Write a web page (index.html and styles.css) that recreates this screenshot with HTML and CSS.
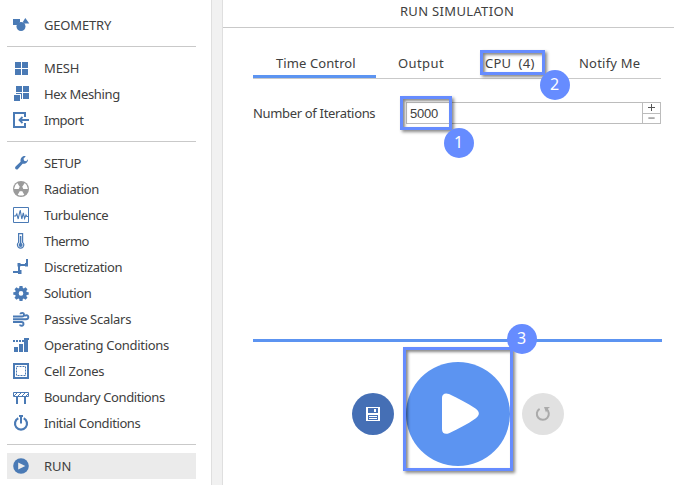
FILE: index.html
```html
<!DOCTYPE html>
<html lang="en">
<head>
<meta charset="utf-8">
<title>Run Simulation</title>
<link rel="stylesheet" href="styles.css">
</head>
<body>
<div class="app">
  <nav class="sidebar">
    <div class="group">
      <a class="item"><svg class="icon" viewBox="0 0 16 16"><path d="M0 2h7v3L4 8H0zM12.300 1l4 5.500H11L9.800 5z"/><circle cx="8" cy="9.500" r="4.500"/></svg><span class="w-geometry">GEOMETRY</span></a>
    </div>
    <div class="group">
      <a class="item"><svg class="icon" viewBox="0 0 16 16"><path d="M2 2h6v6H2zM9 2h6v6H9zM2 9h6v6H2zM9 9h6v6H9z"/></svg><span class="w-mesh">MESH</span></a>
      <a class="item"><svg class="icon" viewBox="0 0 16 16"><path d="M3 0h6v6H3zM10 0h6v6h-6zM10 7h6v6h-6zM1 9h6v6H1zM3 7h6v6H8V8H3z"/></svg><span class="w-hex">Hex Meshing</span></a>
      <a class="item"><svg class="icon line" viewBox="0 0 16 16"><path stroke-width="2" d="M12 5V1H1v14h11v-4"/><path stroke-width="1.8" d="M16 8H7M9.5 5 6.5 8l3 3"/></svg><span class="w-import">Import</span></a>
    </div>
    <div class="group">
      <a class="item"><svg class="icon" viewBox="0 0 16 16"><path d="M15 4.200c.2 3-2.600 5.300-5.400 4.500L5 13.900c-1.700 1.500-4-.7-2.400-2.400l5-4.800C7 3.500 9.300.5 12.700 1.200L10.500 3.700l.6 2 2.100.6z"/></svg><span class="w-setup">SETUP</span></a>
      <a class="item"><svg class="icon" viewBox="0 0 16 16"><circle cx="8" cy="8" r="8" fill="#9b9b9b"/><path fill="#fff" d="M6.900 6.100 4.300 2.100A7 7 0 0 0 1.200 7.500L1.300 8h4.500a2.200 2.200 0 0 1 1.100-1.900zM9.100 6.100l2.600-4a7 7 0 0 1 3.100 5.400L14.700 8h-4.500a2.200 2.200 0 0 0-1.100-1.900zM6.900 9.900 4.700 13.700A7 7 0 0 0 11.300 13.700L9.100 9.900a2.200 2.200 0 0 1-2.200 0z"/><circle cx="8" cy="8" r="1.500" fill="#9b9b9b"/></svg><span class="w-radiation">Radiation</span></a>
      <a class="item"><svg class="icon line" viewBox="0 0 16 16"><path stroke-width="1" d="M.5.5h15v15H.5z"/><path stroke-width="1.100" d="M1 9h1.600l1.200-2 1.400 5 2-9 1.600 9L10.300 6l1.300 5.500L13 8l.8 1.500H15"/></svg><span class="w-turbulence">Turbulence</span></a>
      <a class="item"><svg class="icon line" viewBox="0 0 16 16"><path stroke-width="1.200" d="M5.600.6h4v8.800a3.200 3.200 0 1 1-4 0z"/><path stroke-width="1.500" d="M7.600 3v8"/><circle class="solid" cx="7.600" cy="12" r="2"/></svg><span class="w-thermo">Thermo</span></a>
      <a class="item"><svg class="icon line" viewBox="0 0 16 16"><path stroke-width="2" d="M0 13h6V6h8V0"/><path class="solid" d="M5 11h3.500v4H5zM4.500 4h3v3.500h-3zM12 4h3v3.500h-3z"/></svg><span class="w-discretization">Discretization</span></a>
      <a class="item"><svg class="icon" viewBox="0 0 16 16"><path fill-rule="evenodd" d="M6.500 1h3l.3 2 1 .4 1.700-1.200 2 2-1.200 1.700.4 1 2 .3v2.600l-2 .3-.4 1 1.200 1.700-2 2-1.700-1.200-1 .4-.3 2h-3l-.3-2-1-.4-1.700 1.200-2-2 1.200-1.700-.4-1-2-.3V7.200l2-.3.4-1-1.200-1.700 2-2 1.700 1.200 1-.4zM8 6.100a2.300 2.300 0 1 0 0 4.600 2.300 2.300 0 0 0 0-4.600z"/></svg><span class="w-solution">Solution</span></a>
      <a class="item"><svg class="icon line" viewBox="0 0 16 16"><path stroke-width="1.900" d="M0 5.500h9c2.500 0 2.500-3.600.3-3.600-1.300 0-1.800.7-1.800 1.400M0 8.300h13c3 0 3-4 .5-4-1.200 0-1.600.7-1.600 1.300M0 11h8.500c2.700 0 2.500 3.800.3 3.800-1.200 0-1.700-.7-1.700-1.300"/></svg><span class="w-passive">Passive Scalars</span></a>
      <a class="item"><svg class="icon" viewBox="0 0 16 16"><path d="M0 3h2v2H0zM3 3h2v2H3zM6 3h2v2H6zM9 3h2v2H9zM1 10h4v5H1zM6 7h4v8H6zM11 1h5v2h-1v12h-4z"/></svg><span class="w-operating">Operating Conditions</span></a>
      <a class="item"><svg class="icon line" viewBox="0 0 16 16"><path stroke-width="2" d="M1 1h14v14H1z"/><path stroke-width="1" stroke-dasharray="2 1" d="M3.500 3.500h9v9h-9z"/></svg><span class="w-cell">Cell Zones</span></a>
      <a class="item"><svg class="icon line" viewBox="0 0 16 16"><path stroke-width="1" d="M.5 3.500h15v4H.5zM1 7l3-3M4.500 7.500l4-4M8.500 7.500l4-4M12.500 7.500l3-3"/><path stroke-width="2" d="M4 8v7M12 8v7"/></svg><span class="w-boundary">Boundary Conditions</span></a>
      <a class="item"><svg class="icon line" viewBox="0 0 16 16"><path stroke-width="2.200" d="M5.300 3.200a6 6 0 1 0 5.400 0"/><path stroke-width="2" d="M6 1h4M8 1v7.500"/></svg><span class="w-initial">Initial Conditions</span></a>
    </div>
    <div class="group">
      <a class="item selected"><svg class="icon" viewBox="0 0 16 16"><circle cx="8" cy="8" r="7.800"/><path fill="#ececec" d="M5.200 4.400 12.300 8l-7.100 3.600z"/></svg><span class="w-run">RUN</span></a>
    </div>
  </nav>
  <div class="gutter"></div>
  <main class="panel">
    <h1 class="title"><span class="w-title">RUN SIMULATION</span></h1>
    <div class="content">
      <div class="tabs">
        <div class="tab active"><span class="w-time">Time Control</span></div>
        <div class="tab output"><span class="w-output">Output</span></div>
        <div class="tab cpu"><span class="w-cpu">CPU &nbsp;(4)</span></div>
        <div class="tab notify"><span class="w-notify">Notify Me</span></div>
      </div>
      <div class="field">
        <label class="label"><span class="w-label">Number of Iterations</span></label>
        <div class="spinner">
          <div class="value">5000</div>
          <div class="steps">
            <svg viewBox="0 0 17 10"><path d="M5 4.500h7M8.500 1v7"/></svg>
            <svg viewBox="0 0 17 10"><path d="M5 4.500h7"/></svg>
          </div>
        </div>
      </div>
    </div>
    <div class="footer">
      <div class="round save"><svg width="14" height="14" viewBox="0 0 14 14"><path fill="#fff" fill-rule="evenodd" d="M0 0h14v14H0zM2 1v5h10V1zM2 8v5h10V8z"/><path fill="#fff" d="M8 2h2v3H8zM3 9h8v1H3zM3 11h8v1H3z"/></svg></div>
      <div class="round play"><svg width="104" height="104" viewBox="0 0 104 104"><path fill="#fff" d="M36 36c0-4 3-5.500 7-4 10 4.500 18 9 26.500 14.500 4.500 3 4.500 7 0 10C61 62.500 53 66.500 43 71.300c-4 1.500-7 0-7-4z"/></svg></div>
      <div class="round reset"><svg width="16" height="16" viewBox="0 0 16 16"><path fill="none" stroke="#aaa" stroke-width="2" d="M4.600 2.800a6 6 0 1 0 6.600.1"/><path fill="#aaa" d="M9 1h6l-1.800 1.500L11 6.500z"/></svg></div>
    </div>
  </main>
  <div class="mark mark-input"></div>
  <div class="mark mark-cpu"></div>
  <div class="mark mark-play"></div>
  <div class="badge badge-1">1</div>
  <div class="badge badge-2">2</div>
  <div class="badge badge-3">3</div>
</div>
</body>
</html>
```
FILE: styles.css
```css
* { box-sizing: border-box; }
body {
  margin: 0;
  background: #fff;
  color: #404040;
  font: 13px/26px "Noto Sans", "Open Sans", sans-serif;
}
.app {
  position: relative;
  display: flex;
  width: 674px;
  height: 485px;
  overflow: hidden;
}
.sidebar { width: 211px; padding: 4px 15px 0 7px; }
.group { padding: 8px 0; border-bottom: 1px solid #c9c9c9; }
.group:last-child { border-bottom: 0; }
.item { display: flex; align-items: center; height: 26px; padding-left: 6px; gap: 15px; white-space: nowrap; }
.item.selected { background: #ebebeb; }
.icon { width: 16px; height: 16px; flex: none; fill: #4a7ab5; overflow: visible; }
.icon.line { fill: none; stroke: #4a7ab5; }
.icon .solid { fill: #4a7ab5; stroke: none; }
.gutter { width: 12px; background: #f1f1f1; border: solid #dfdfdf; border-width: 0 1px; }

/* Label tracking */
.w-geometry { letter-spacing: -.17px; }
.w-mesh { letter-spacing: -.1px; }
.w-setup { letter-spacing: -.4px; }
.w-hex { letter-spacing: -.36px; }
.w-import { letter-spacing: -.5px; }
.w-radiation { letter-spacing: -.33px; }
.w-turbulence { letter-spacing: -.4px; }
.w-thermo { letter-spacing: -.5px; }
.w-discretization { letter-spacing: -.35px; }
.w-solution { letter-spacing: -.37px; }
.w-passive { letter-spacing: -.27px; }
.w-operating { letter-spacing: -.3px; }
.w-cell { letter-spacing: -.22px; }
.w-boundary { letter-spacing: -.42px; }
.w-initial { letter-spacing: -.4px; }
.w-title { letter-spacing: .33px; }
.w-time { letter-spacing: .1px; }
.w-output { letter-spacing: .4px; }
.w-cpu { letter-spacing: .25px; }
.w-notify { letter-spacing: .22px; }
.w-label { letter-spacing: -.33px; }

.panel { flex: 1; display: flex; flex-direction: column; min-width: 0; }
.title {
  display: flex;
  justify-content: center;
  height: 28px;
  margin: 0;
  padding-left: 17px;
  border-bottom: 1px solid #c9c9c9;
  font-size: 13px;
  font-weight: 400;
  line-height: 23px;
}
.content { height: 311px; padding: 22px 13px 0 30px; }
.tabs { display: flex; height: 29px; border-bottom: 1px solid #c9c9c9; white-space: nowrap; }
.tab { height: 28px; }
.tab.active { width: 123px; padding-left: 23px; border-bottom: 3px solid #5c94f1; }
.tab.output { padding-left: 22px; width: 109px; }
.tab.cpu { width: 94px; }
.field { display: flex; align-items: center; height: 22px; margin-top: 23px; }
.label { width: 153px; white-space: nowrap; }
.spinner { display: flex; flex: 1; height: 22px; border: 1px solid #bcbcbc; }
.value { flex: 1; padding-left: 3px; font: 13px/22px "Liberation Sans", sans-serif; letter-spacing: -.25px; }
.steps { display: flex; flex-direction: column; width: 18px; border-left: 1px solid #bcbcbc; }
.steps svg { width: 17px; height: 10px; fill: none; stroke: #555; }
.steps svg + svg { border-top: 1px solid #bcbcbc; }

.footer {
  display: flex;
  align-items: center;
  justify-content: center;
  gap: 12px;
  height: 146px;
  margin: 0 12px 0 30px;
  border-top: 3px solid #5c94f1;
}
.round { display: flex; align-items: center; justify-content: center; width: 42px; height: 42px; border-radius: 50%; }
.save { background: #456fb5; }
.play { width: 104px; height: 104px; background: #5c94f1; }
.reset { background: #e1e1e1; }

.mark { position: absolute; border: 3px solid #668cff; box-shadow: 2px 2px 3px #0007, inset 2px 2px 3px #0007; }
.mark-input { left: 400px; top: 96px; width: 52px; height: 34px; }
.mark-cpu { left: 480px; top: 50px; width: 65px; height: 25px; }
.mark-play { left: 403px; top: 347px; width: 110px; height: 124px; }
.badge {
  position: absolute;
  width: 30px;
  height: 30px;
  border-radius: 50%;
  background: #668cff;
  color: #fff;
  font: 16px/29px "Noto Sans", sans-serif;
  text-align: center;
}
.badge-1 { left: 443.500px; top: 128px; }
.badge-2 { left: 539.500px; top: 69.500px; }
.badge-3 { left: 506.500px; top: 323.500px; }
```
